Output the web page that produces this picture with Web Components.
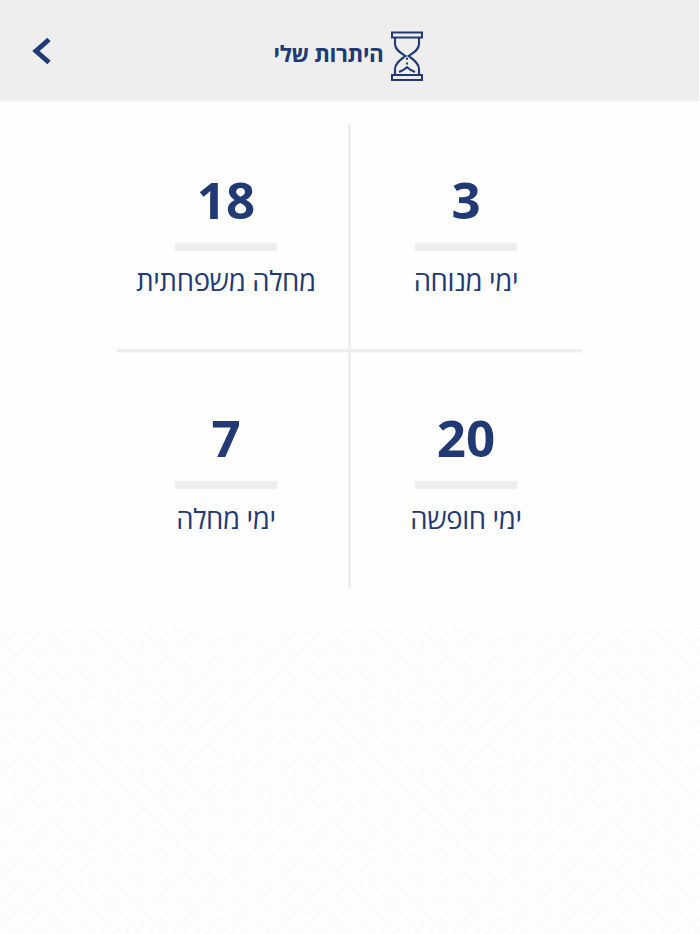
<!DOCTYPE html>
<html lang="he" dir="rtl">
<head>
<meta charset="utf-8">
<title>היתרות שלי</title>
<style>
  body {
    margin: 0;
    background: #fefefe;
    color: #213a73;
    font-family: 'Open Sans', 'Noto Sans', sans-serif;
  }
</style>
</head>
<body>
<balance-page>
  <balance-header slot="header">היתרות שלי</balance-header>
  <balance-grid>
    <balance-card value="3">ימי מנוחה</balance-card>
    <balance-card value="18">מחלה משפחתית</balance-card>
    <balance-card value="20">ימי חופשה</balance-card>
    <balance-card value="7">ימי מחלה</balance-card>
  </balance-grid>
</balance-page>

<script>
  // Outlines of 2:1 herringbone bricks for a 4x4 cell tile, with the
  // neighbouring tiles included so strokes wrap over the edges.
  function herringbonePath(w) {
    let d = '';
    for (let r = 0; r < 4; r++) {
      for (const dx of [-4, 0, 4]) {
        for (const dy of [-4, 0, 4]) {
          const x = (r + dx) * w;
          const y = (r + dy) * w;
          d += `M${x} ${y}h${2 * w}v${w}h${-2 * w}z`;
          d += `M${x + 3 * w} ${y}h${w}v${2 * w}h${-w}z`;
        }
      }
    }
    return d;
  }

  class BalancePage extends HTMLElement {
    constructor() {
      super();
      this.attachShadow({ mode: 'open' });
      this.shadowRoot.innerHTML = `
        <style>
          :host {
            display: flex;
            flex-direction: column;
            height: 934px;
            overflow: hidden;
          }
          main {
            height: 526.5px;
            flex-shrink: 0;
          }
          .weave {
            display: block;
            flex: 1;
            width: 100%;
            min-height: 0;
          }
        </style>
        <slot name="header"></slot>
        <main><slot></slot></main>
        <svg class="weave" aria-hidden="true">
          <defs>
            <pattern id="weave" width="33" height="33" patternUnits="userSpaceOnUse" patternTransform="translate(4 6) rotate(45)">
              <path d="${herringbonePath(8.25)}" fill="none" stroke="#fafafa" stroke-width="1.5"/>
            </pattern>
          </defs>
          <rect width="100%" height="100%" fill="url(#weave)"/>
        </svg>
      `;
    }
  }

  class BalanceHeader extends HTMLElement {
    constructor() {
      super();
      this.attachShadow({ mode: 'open' });
      this.shadowRoot.innerHTML = `
        <style>
          :host {
            display: grid;
            grid-template-columns: 1fr auto 1fr;
            align-items: center;
            flex-shrink: 0;
            box-sizing: border-box;
            width: 699px;
            height: 100.5px;
            margin-right: 1px;
            background: #eee;
          }
          .title {
            grid-column: 2;
            display: flex;
            align-items: center;
            gap: 7.5px;
            padding: 11px 2.5px 0 0;
          }
          h1 {
            margin: 0 0 3px;
            font-size: 22.5px;
            line-height: 32px;
            font-weight: 700;
            letter-spacing: -0.4px;
            white-space: nowrap;
          }
          svg {
            display: block;
            fill: none;
            stroke: currentColor;
          }
          button {
            justify-self: end;
            margin: 0 0 0 32px;
            padding: 2px 0 0;
            border: 0;
            background: none;
            color: inherit;
          }
        </style>
        <div class="title">
          <svg width="32" height="50" viewBox="0 0 32 50" stroke-width="2.1">
            <path d="M1 1.500H31V6.500H1ZM1 44H31V49H1Z"/>
            <path d="M4 7V13C4 19 10 22 14.500 25C10 28.500 4 32 4 38V43.500M28 7V13C28 19 22 22 17.500 25C22 28.500 28 32 28 38V43.500"/>
            <path d="M8 41Q12.500 39.500 16 36.300Q19.500 39.500 24 41"/>
            <path d="M16 26.800V34.500" stroke-dasharray="2 2.600"/>
          </svg>
          <h1><slot></slot></h1>
        </div>
        <button aria-label="חזרה">
          <svg width="20" height="28" viewBox="0 0 20 28" stroke-width="5">
            <path d="M17 2.500L4 14L17 25.500"/>
          </svg>
        </button>
      `;
    }
  }

  class BalanceGrid extends HTMLElement {
    constructor() {
      super();
      this.attachShadow({ mode: 'open' });
      this.shadowRoot.innerHTML = `
        <style>
          :host {
            display: block;
            direction: ltr;
            width: 465px;
            height: 465.5px;
            margin: 23px 118px 0 0;
            background:
              linear-gradient(#eee, #eee) 231px 0 / 3px 100% no-repeat,
              linear-gradient(#eee, #eee) 0 225.500px / 100% 3.500px no-repeat;
          }
          .cells {
            display: grid;
            direction: rtl;
            grid-template-columns: 240px 240px;
            grid-auto-rows: 238px;
            width: 480px;
            margin-left: -11px;
          }
        </style>
        <div class="cells"><slot></slot></div>
      `;
    }
  }

  class BalanceCard extends HTMLElement {
    constructor() {
      super();
      this.attachShadow({ mode: 'open' });
    }

    connectedCallback() {
      this.shadowRoot.innerHTML = `
        <style>
          :host {
            display: flex;
            flex-direction: column;
            align-items: center;
            padding-top: 40px;
          }
          .value {
            font-size: 51px;
            line-height: 70px;
            font-weight: 700;
          }
          .bar {
            width: 102px;
            height: 8px;
            margin: 9px 0 10px;
            background: #eee;
          }
          .label {
            font-size: 27.5px;
            line-height: 40px;
            font-weight: 400;
            letter-spacing: -0.35px;
            white-space: nowrap;
          }
        </style>
        <div class="value">${this.getAttribute('value')}</div>
        <div class="bar"></div>
        <div class="label"><slot></slot></div>
      `;
    }
  }

  customElements.define('balance-page', BalancePage);
  customElements.define('balance-header', BalanceHeader);
  customElements.define('balance-grid', BalanceGrid);
  customElements.define('balance-card', BalanceCard);
</script>
</body>
</html>
